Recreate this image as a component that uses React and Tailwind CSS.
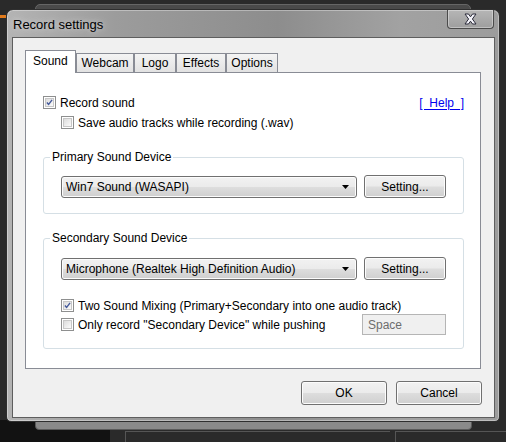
import React from 'react';

const font = { fontFamily: '"Liberation Sans", Arial, sans-serif' };

const Check = ({ checked, label }) => (
  <label className="flex items-center gap-[4px] h-[15px] text-[12px] text-black leading-none select-none">
    <span className="w-[13px] h-[13px] border border-[#8e8f8f] bg-white p-px shrink-0">
      <span className="flex items-center justify-center w-full h-full border border-[#c7c7c7] bg-gradient-to-br from-[#dcdcdc] to-[#fbfbfb]">
        {checked && (
          <svg width="9" height="9" viewBox="0 0 9 9">
            <path d="M1.2 4.6 L3.4 7 L7.8 1.2" fill="none" stroke="#44599a" strokeWidth="1.8" strokeLinejoin="round" />
          </svg>
        )}
      </span>
    </span>
    <span>{label}</span>
  </label>
);

const Button = ({ children, className = '' }) => (
  <button
    type="button"
    className={`h-[23px] rounded-[3px] border border-[#707070] bg-[linear-gradient(#f2f2f2_0%,#ebebeb_48%,#dddddd_52%,#cfcfcf_100%)] shadow-[inset_0_0_0_1px_#fcfcfc] text-[12px] text-black leading-none ${className}`}
  >
    {children}
  </button>
);

const Combo = ({ value }) => (
  <div className="flex items-center justify-between w-[296px] h-[22px] rounded-[3px] border border-[#707070] bg-[linear-gradient(#f2f2f2_0%,#ebebeb_48%,#dddddd_52%,#cfcfcf_100%)] shadow-[inset_0_0_0_1px_#fcfcfc] pl-[4px] pr-[7px] text-[12px] text-black">
    <span>{value}</span>
    <svg width="7" height="4" viewBox="0 0 7 4">
      <path d="M0 0 H7 L3.5 4 Z" fill="#000" />
    </svg>
  </div>
);

// fieldset padding also pushes the legend in, so pull it back toward the corner
const Group = ({ title, children, className = '' }) => (
  <fieldset className={`w-[420px] border border-[#d5dfe5] rounded-[3px] px-[17px] ${className}`}>
    <legend className="-ml-[11px] px-[2px] text-[12px] leading-[14px] text-black">{title}</legend>
    {children}
  </fieldset>
);

const tabs = [
  { name: 'Sound', w: 'w-[51px]' },
  { name: 'Webcam', w: 'w-[58px]' },
  { name: 'Logo', w: 'w-[42px]' },
  { name: 'Effects', w: 'w-[50px]' },
  { name: 'Options', w: 'w-[52px]' },
];

export default function App() {
  return (
    <div className="relative w-[506px] h-[442px] overflow-hidden bg-[#2a2a2a]" style={font}>
      {/* desktop behind the dialog */}
      <div className="absolute left-[35px] top-[4px] w-[436px] h-[10px] rounded-t-[5px] bg-[#4a4a4a] border border-[#666]" />
      <div className="absolute left-0 top-[15px] w-[6px] h-[3px] bg-[#e07a1c]" />
      <div className="absolute left-0 top-[420px] w-[110px] h-[22px] bg-[#121212]" />
      <div className="absolute left-[35px] top-[420px] w-[437px] h-[10px] rounded-b-[4px] bg-[#8a8a8a] border border-[#5a5a5a]" />
      <div className="absolute left-[125px] top-[431px] w-[265px] h-[11px] border-t border-l border-[#555]" />
      <div className="absolute left-[395px] top-[431px] w-[111px] h-[11px] border-t border-l border-[#555]" />

      {/* dialog window */}
      <div className="relative ml-[6px] mt-[9px] w-[494px] h-[413px] flex flex-col rounded-t-[7px] rounded-b-[5px] border border-[#2f2f2f] bg-[linear-gradient(90deg,#b4b4b4_0%,#9c9c9c_22%,#8d8d8d_55%,#a2a2a2_80%,#9c9c9c_100%)] shadow-[inset_0_0_0_1px_rgba(255,255,255,0.35)]">
        <div className="flex items-start justify-between h-[27px]">
          <span className="pl-[6px] pt-[7px] text-[13px] leading-[16px] text-black [text-shadow:0_0_6px_rgba(230,230,230,0.95)]">
            Record settings
          </span>
          <div className="mr-[5px] w-[47px] h-[19px] flex items-center justify-center rounded-b-[4px] border border-t-0 border-[#4b4b4b] bg-[linear-gradient(#b6b6b6,#9e9e9e)] shadow-[inset_0_0_0_1px_rgba(255,255,255,0.35)]">
            <svg width="15" height="12" viewBox="0 0 15 12">
              <path d="M2 1 H5.5 L7.5 3.8 L9.5 1 H13 L9.4 6 L13 11 H9.5 L7.5 8.2 L5.5 11 H2 L5.6 6 Z" fill="#f4f4fa" stroke="#2b2b3a" strokeWidth="1" strokeLinejoin="round" />
            </svg>
          </div>
        </div>

        {/* client area */}
        <div className="mx-[5px] w-[483px] h-[381px] border border-[#5e5e5e] bg-[#f0f0f0] pl-[12px] pt-[12px] flex flex-col">
          <div className="flex items-end h-[22px] relative z-10">
            {tabs.map((t, i) =>
              i === 0 ? (
                <div key={t.name} className={`${t.w} h-[23px] -mb-px border border-b-0 border-[#898c95] bg-white text-[12px] text-black pl-[7px] pt-[3px] leading-[14px]`}>
                  {t.name}
                </div>
              ) : (
                <div key={t.name} className={`${t.w} h-[19px] border border-b-0 border-[#898c95] bg-[linear-gradient(#f4f4f4,#e2e2e2)] text-[12px] text-black text-center pt-[2px] leading-[14px]`}>
                  {t.name}
                </div>
              )
            )}
          </div>

          <div className="w-[456px] h-[297px] border border-[#898c95] bg-white pl-[17px] pt-[22px] flex flex-col">
            <div className="flex items-center justify-between pr-[16px]">
              <Check checked label="Record sound" />
              <a className="text-[12px] text-[#0000ee] underline underline-offset-[2px] leading-none whitespace-pre" href="#help">{'[  Help  ]'}</a>
            </div>
            <div className="mt-[5px] ml-[18px]">
              <Check label="Save audio tracks while recording (.wav)" />
            </div>

            <Group title="Primary Sound Device" className="mt-[20px] pb-[15px]">
              <div className="flex items-center gap-[7px] mt-[11px]">
                <Combo value="Win7 Sound (WASAPI)" />
                <Button className="w-[82px]">Setting...</Button>
              </div>
            </Group>

            <Group title="Secondary Sound Device" className="mt-[17px] pb-[13px]">
              <div className="flex items-center gap-[7px] mt-[12px]">
                <Combo value="Microphone (Realtek High Definition Audio)" />
                <Button className="w-[82px]">Setting...</Button>
              </div>
              <div className="mt-[18px]">
                <Check checked label="Two Sound Mixing (Primary+Secondary into one audio track)" />
              </div>
              <div className="mt-px flex items-center justify-between">
                <Check label={'Only record "Secondary Device" while pushing'} />
                <div className="w-[84px] h-[21px] border border-[#b5b5b5] bg-[#f0f0f0] text-[12px] text-[#6d6d6d] pl-[5px] flex items-center">
                  Space
                </div>
              </div>
            </Group>
          </div>

          <div className="flex justify-end gap-[9px] pr-[12px] mt-[12px]">
            <Button className="w-[86px] h-[24px]">OK</Button>
            <Button className="w-[86px] h-[24px]">Cancel</Button>
          </div>
        </div>
      </div>
    </div>
  );
}
